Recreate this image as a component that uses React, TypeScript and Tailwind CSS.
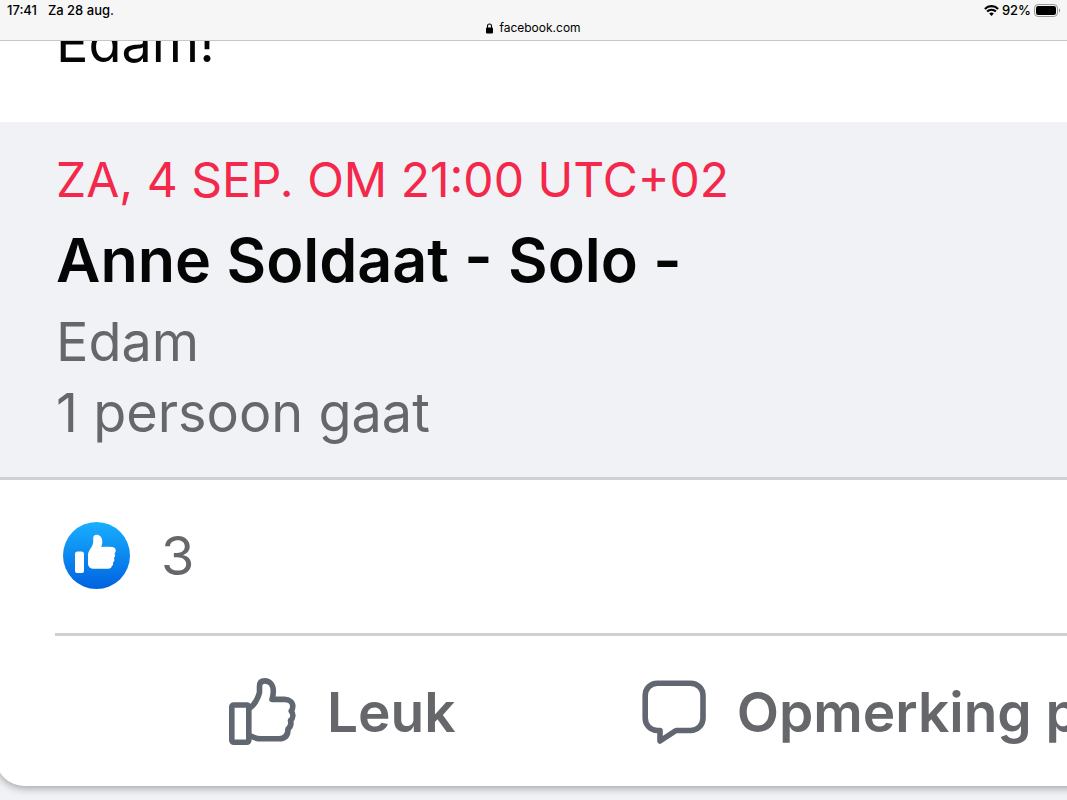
import React from "react";

function StatusBar() {
  return (
    <header className="sticky top-0 z-10 h-[41px] border-b border-[#c6c6c8] bg-[#f6f6f6] text-[13px] leading-5 text-black">
      <div className="flex items-center justify-between pl-[7px] pr-1.5 font-medium">
        <div className="flex gap-[11px]">
          <span>17:41</span>
          <span>Za 28 aug.</span>
        </div>
        <div className="flex items-center gap-[3px]">
          <WifiIcon />
          <span>92%</span>
          <BatteryIcon />
        </div>
      </div>
      <div className="flex h-4 items-center justify-center gap-1.5 text-[12px]">
        <LockIcon />
        <span>facebook.com</span>
      </div>
    </header>
  );
}

function WifiIcon() {
  return (
    <svg aria-hidden="true" width="15" height="11" viewBox="0 0 15 11" fill="none" stroke="#000" strokeWidth="2.1">
      <path d="M.9 3.9a9.3 9.3 0 0 1 13.2 0" />
      <path d="M3.1 6.6a6.2 6.2 0 0 1 8.8 0" />
      <path d="M7.5 10.9 5.2 8.6a3.2 3.2 0 0 1 4.6 0z" fill="#000" stroke="none" />
    </svg>
  );
}

function BatteryIcon() {
  return (
    <svg aria-hidden="true" width="27" height="13" viewBox="0 0 27 13">
      <rect x=".5" y=".5" width="23" height="12" rx="3.6" fill="none" stroke="#98989a" />
      <rect x="2" y="2" width="20" height="9" rx="2.2" />
      <path d="M25 4.5c1.6.5 1.6 3.5 0 4z" fill="#98989a" />
    </svg>
  );
}

function LockIcon() {
  return (
    <svg aria-hidden="true" width="7" height="11" viewBox="0 0 7 11">
      <rect y="4.6" width="7" height="5.8" rx="1" />
      <path d="M1.5 5V3a2 2 0 0 1 4 0v2" fill="none" stroke="#000" strokeWidth="1.1" />
    </svg>
  );
}

function LikeBadge() {
  return (
    <svg aria-hidden="true" className="shrink-0" width="67" height="67" viewBox="0 0 67 67">
      <defs>
        <linearGradient id="like-blue" x1="0" y1="0" x2="0" y2="1">
          <stop offset="0" stopColor="#18afff" />
          <stop offset="1" stopColor="#0062e0" />
        </linearGradient>
      </defs>
      <circle cx="33.5" cy="33.5" r="33.5" fill="url(#like-blue)" />
      <rect x="12" y="29.5" width="9" height="21.5" rx="2.6" fill="#fff" />
      <path
        fill="#fff"
        d="M30.2 16.2C30.2 14 31.4 12.7 33.3 12.7C36.8 12.7 39.3 15.3 39.3 19.3C39.3 21.8 38.8 23.5 38.3 25C42 24.6 46 24.6 49.3 25C52 25.4 53 27.1 52.7 29.2C52.6 30.1 52 30.8 51.3 31.2C52.5 32.2 52.7 34.5 50.9 36C51.9 37.4 51.5 39.6 49.9 40.5C50.5 42.2 49.9 43.3 48.8 44.1C48.5 46 47.3 46.8 45.2 46.8H31C27.5 46.8 25 44.8 25 41.5V33.5C25 29 28.2 26.6 29.6 22.8C30.4 20.6 30.2 18.5 30.2 16.2Z"
      />
    </svg>
  );
}

function ThumbIcon() {
  return (
    <svg
      aria-hidden="true"
      className="shrink-0"
      width="68"
      height="68"
      viewBox="0 0 68 68"
      fill="none"
      stroke="#606770"
      strokeWidth="5.6"
      strokeLinejoin="round"
      strokeLinecap="round"
    >
      <rect x="3.8" y="27" width="17" height="37.3" rx="2" />
      <path d="M22 30C26 27.5 30 20.5 31.5 14.5V8.5C31.5 4.5 33.5 2.9 36.7 2.9C42 2.9 45.3 7 45.3 13C45.3 16.5 44.8 19 44 21.4H56.5C61.5 21.4 64.8 24.2 64.8 28.2C64.8 30.5 64.2 31.8 63.2 33C65.5 36 65.5 40 62.5 42.5C63.5 46 62.5 49 60 51C60 57.5 57 60.8 51 60.8H33C28.5 60.8 25.5 59.5 22 57.8" />
    </svg>
  );
}

function CommentIcon() {
  return (
    <svg
      aria-hidden="true"
      className="shrink-0"
      width="64"
      height="64"
      viewBox="0 0 64 64"
      fill="none"
      stroke="#606770"
      strokeWidth="5.6"
      strokeLinejoin="round"
    >
      <path d="M15.5 3.2H48.5C55.5 3.2 61 8.5 61 15.5V38C61 45 55.5 50.5 48.5 50.5H34L18 61V50.5H15.5C8.5 50.5 3.2 45 3.2 38V15.5C3.2 8.5 8.5 3.2 15.5 3.2Z" />
    </svg>
  );
}

export default function App() {
  return (
    <div className="min-h-screen overflow-hidden bg-[#f0f2f5] font-['Inter',sans-serif]">
      <StatusBar />
      <main>
        <article className="-ml-1 -mr-4 rounded-bl-[28px] bg-white text-[54px] leading-[71px] text-[#65676b] shadow-[0_2px_8px_rgba(0,0,0,0.35)]">
          <p className="-mt-[34px] pb-11 pl-[60px] text-[#050505]">Edam!</p>

          <section className="border-b-[3px] border-[#ced0d4] bg-[#f0f2f5] pb-[29px] pl-[60px] pt-7">
            <p className="text-[48px] leading-[60px] text-[#f3284b]">ZA, 4 SEP. OM 21:00 UTC+02</p>
            <h1 className="mb-1.5 mt-2.5 text-[61px] font-semibold leading-[80px] text-[#050505]">
              Anne Soldaat - Solo -
            </h1>
            <p>Edam</p>
            <p>1 persoon gaat</p>
          </section>

          <div className="flex h-[153px] items-center gap-[31px] pb-[3px] pl-[67px]">
            <LikeBadge />
            <span>3</span>
          </div>

          <div className="ml-[59px] flex h-[153px] items-center gap-[186px] whitespace-nowrap border-t-[3px] border-[#ced0d4] pl-[173px] pt-0.5 text-[55px] font-semibold">
            <button type="button" className="flex shrink-0 items-center gap-[31px]">
              <ThumbIcon />
              Leuk
            </button>
            <button type="button" className="flex shrink-0 items-center gap-[31px]">
              <CommentIcon />
              Opmerking p
            </button>
          </div>
        </article>
      </main>
    </div>
  );
}
